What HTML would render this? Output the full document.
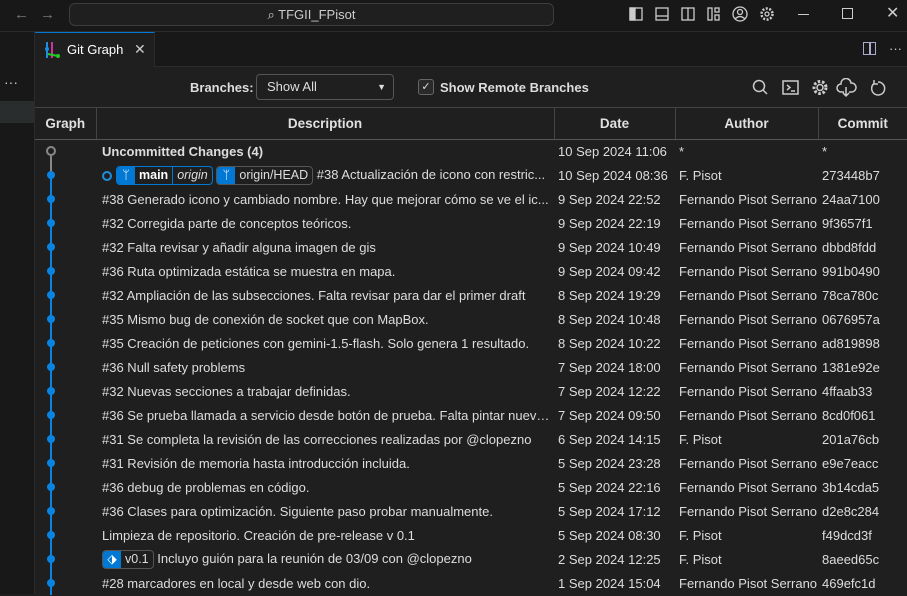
<!DOCTYPE html>
<html><head><meta charset="utf-8"><style>
*{box-sizing:border-box;margin:0;padding:0}
body{width:907px;height:594px;overflow:hidden;background:#1f1f1f;font-family:"Liberation Sans",sans-serif;color:#ccc;font-size:13px;position:relative}
.abs{position:absolute}
#title{left:0;top:0;width:907px;height:32px;background:#181818;border-bottom:1px solid #2b2b2b}
#search{left:69px;top:3px;width:485px;height:23px;border:1px solid #3c3c3c;border-radius:6px;background:#1f1f1f;text-align:center;line-height:21px;color:#ccc;font-size:13px}
#side{left:0;top:32px;width:35px;height:562px;background:#181818;border-right:1px solid #2b2b2b}
#tabs{left:35px;top:32px;width:872px;height:35px;background:#181818;border-bottom:1px solid #2b2b2b}
#tab{left:35px;top:32px;width:120px;height:35px;background:#1f1f1f;border-top:1px solid #0078d4;border-right:1px solid #2b2b2b}
table{position:absolute;left:35px;top:107px;border-collapse:collapse;width:872px;table-layout:fixed}
th{height:32px;color:#e0e0e0;font-size:13.5px;font-weight:bold;border-right:1px solid #444;border-bottom:1px solid #555;border-top:1px solid #444}
td{height:24px;white-space:nowrap;overflow:hidden;text-overflow:ellipsis;padding-left:4px;color:#ddd;font-size:13px}
.ref{display:inline-flex;height:19px;border:1px solid #0078d4;border-radius:4px;vertical-align:middle;overflow:hidden;font-size:12.5px;line-height:17px}
.ref .i{background:#0078d4;width:18px;color:#fff;text-align:center}
.ref span{padding:0 4px}
</style></head><body>
<div id="title" class="abs"></div>
<div class="abs" style="left:14px;top:6px;color:#777;font-size:15px">←</div>
<div class="abs" style="left:40px;top:6px;color:#777;font-size:15px">→</div>
<div id="search" class="abs">⌕ TFGII_FPisot</div>
<svg class="abs" style="left:628px;top:6px" width="150" height="18" fill="none" stroke="#ccc" stroke-width="1.3">
<rect x="2" y="2" width="12" height="12"/><rect x="2" y="2" width="5" height="12" fill="#ccc"/>
<rect x="28" y="2" width="12" height="12"/><line x1="28" y1="10" x2="40" y2="10"/>
<rect x="54" y="2" width="12" height="12"/><line x1="60" y1="2" x2="60" y2="14"/>
<rect x="80" y="2" width="4" height="12"/><rect x="87" y="2" width="4" height="4"/><rect x="87" y="9" width="4" height="5"/>
<circle cx="112" cy="8" r="7"/><circle cx="112" cy="6" r="2.5"/><path d="M107 13 Q112 8 117 13"/>
<circle cx="139" cy="8" r="5.5" stroke-dasharray="2 1.5" stroke-width="2.5"/><circle cx="139" cy="8" r="2"/>
</svg>
<div class="abs" style="left:798px;top:14px;width:11px;height:1px;background:#ccc"></div>
<div class="abs" style="left:842px;top:8px;width:11px;height:11px;border:1px solid #ccc"></div>
<div class="abs" style="left:886px;top:3px;color:#ccc;font-size:16px">✕</div>
<div id="side" class="abs"></div>
<div class="abs" style="left:0;top:101px;width:34px;height:22px;background:#2a2d2e"></div>
<div class="abs" style="left:4px;top:74px;color:#ccc;font-size:14px">···</div>
<div id="tabs" class="abs"></div>
<div id="tab" class="abs"></div>
<svg class="abs" style="left:45px;top:42px" width="16" height="16"><rect x="1" y="0" width="2" height="16" fill="#1a8fe0"/><rect x="6" y="0" width="2" height="16" fill="#d030a0"/><circle cx="2" cy="7" r="2" fill="#1a8fe0"/><line x1="3" y1="12" x2="13" y2="14" stroke="#2c2" stroke-width="2"/><circle cx="13" cy="14" r="2" fill="#2c2"/></svg>
<div class="abs" style="left:67px;top:42px;color:#fff;font-size:13px">Git Graph</div>
<div class="abs" style="left:134px;top:41px;color:#ccc;font-size:14px">✕</div>
<div class="abs" style="left:863px;top:42px;width:13px;height:13px;border:1.5px solid #aac;"></div>
<div class="abs" style="left:869px;top:42px;width:1.5px;height:13px;background:#aac"></div>
<div class="abs" style="left:889px;top:41px;color:#ccc">···</div>
<div class="abs" style="left:190px;top:80px;font-weight:bold;color:#ddd">Branches:</div>
<div class="abs" style="left:256px;top:74px;width:138px;height:26px;border:1px solid #555;border-radius:4px;background:#1f1f1f;padding-left:10px;line-height:24px;color:#ddd">Show All<span style="position:absolute;right:7px;font-size:9px">▼</span></div>
<div class="abs" style="left:418px;top:79px;width:16px;height:16px;border:1px solid #666;border-radius:3px;background:#2a2a2a;color:#ddd;font-size:11px;text-align:center;line-height:14px">✓</div>
<div class="abs" style="left:440px;top:80px;font-weight:bold;color:#ddd">Show Remote Branches</div>
<svg class="abs" style="left:750px;top:78px" width="140" height="20" fill="none" stroke="#ccc" stroke-width="1.5">
<circle cx="9" cy="8" r="5.5"/><line x1="13" y1="12" x2="17" y2="16"/>
<rect x="33" y="3" width="15" height="13"/><path d="M37 7 l3 2.5 -3 2.5 M41 13 h4"/>
<circle cx="70" cy="9.5" r="3" /><circle cx="70" cy="9.5" r="6" stroke-dasharray="2.5 1.8" stroke-width="3"/>
<path d="M94 14 h-3 a4 4 0 0 1 0-8 a5 5 0 0 1 10-1 a4 4 0 0 1 1 9 h-3 M96 9 v9 M93 15 l3 3 3-3"/>
<path d="M128 4 a6.5 6.5 0 1 1 -4 1.5 M124 2 v4 h4"/>
</svg>
<table>
<colgroup><col style="width:61px"><col style="width:458px"><col style="width:121px"><col style="width:143px"><col style="width:89px"></colgroup>
<tr><th>Graph</th><th>Description</th><th>Date</th><th>Author</th><th style="border-right:none">Commit</th></tr>
<tr><td></td><td style="padding-left:6px;font-weight:bold">Uncommitted Changes (4)</td><td>10 Sep 2024 11:06</td><td>*</td><td>*</td></tr>
<tr><td></td><td style="padding-left:6px"><span style="display:inline-block;width:10px;height:10px;border:2px solid #1a8fe0;border-radius:50%;vertical-align:middle;margin-right:4px"></span><span class="ref"><span class="i">ᛘ</span><span style="font-weight:bold;color:#fff;border-right:1px solid #0078d4">main</span><span style="font-style:italic">origin</span></span> <span class="ref" style="border-color:#555"><span class="i">ᛘ</span><span>origin/HEAD</span></span> #38 Actualización de icono con restric...</td><td>10 Sep 2024 08:36</td><td>F. Pisot</td><td>273448b7</td></tr>
<tr><td></td><td style="padding-left:6px">#38 Generado icono y cambiado nombre. Hay que mejorar cómo se ve el ic...</td><td>9 Sep 2024 22:52</td><td>Fernando Pisot Serrano</td><td>24aa7100</td></tr>
<tr><td></td><td style="padding-left:6px">#32 Corregida parte de conceptos teóricos.</td><td>9 Sep 2024 22:19</td><td>Fernando Pisot Serrano</td><td>9f3657f1</td></tr>
<tr><td></td><td style="padding-left:6px">#32 Falta revisar y añadir alguna imagen de gis</td><td>9 Sep 2024 10:49</td><td>Fernando Pisot Serrano</td><td>dbbd8fdd</td></tr>
<tr><td></td><td style="padding-left:6px">#36 Ruta optimizada estática se muestra en mapa.</td><td>9 Sep 2024 09:42</td><td>Fernando Pisot Serrano</td><td>991b0490</td></tr>
<tr><td></td><td style="padding-left:6px">#32 Ampliación de las subsecciones. Falta revisar para dar el primer draft</td><td>8 Sep 2024 19:29</td><td>Fernando Pisot Serrano</td><td>78ca780c</td></tr>
<tr><td></td><td style="padding-left:6px">#35 Mismo bug de conexión de socket que con MapBox.</td><td>8 Sep 2024 10:48</td><td>Fernando Pisot Serrano</td><td>0676957a</td></tr>
<tr><td></td><td style="padding-left:6px">#35 Creación de peticiones con gemini-1.5-flash. Solo genera 1 resultado.</td><td>8 Sep 2024 10:22</td><td>Fernando Pisot Serrano</td><td>ad819898</td></tr>
<tr><td></td><td style="padding-left:6px">#36 Null safety problems</td><td>7 Sep 2024 18:00</td><td>Fernando Pisot Serrano</td><td>1381e92e</td></tr>
<tr><td></td><td style="padding-left:6px">#32 Nuevas secciones a trabajar definidas.</td><td>7 Sep 2024 12:22</td><td>Fernando Pisot Serrano</td><td>4ffaab33</td></tr>
<tr><td></td><td style="padding-left:6px">#36 Se prueba llamada a servicio desde botón de prueba. Falta pintar nueva...</td><td>7 Sep 2024 09:50</td><td>Fernando Pisot Serrano</td><td>8cd0f061</td></tr>
<tr><td></td><td style="padding-left:6px">#31 Se completa la revisión de las correcciones realizadas por @clopezno</td><td>6 Sep 2024 14:15</td><td>F. Pisot</td><td>201a76cb</td></tr>
<tr><td></td><td style="padding-left:6px">#31 Revisión de memoria hasta introducción incluida.</td><td>5 Sep 2024 23:28</td><td>Fernando Pisot Serrano</td><td>e9e7eacc</td></tr>
<tr><td></td><td style="padding-left:6px">#36 debug de problemas en código.</td><td>5 Sep 2024 22:16</td><td>Fernando Pisot Serrano</td><td>3b14cda5</td></tr>
<tr><td></td><td style="padding-left:6px">#36 Clases para optimización. Siguiente paso probar manualmente.</td><td>5 Sep 2024 17:12</td><td>Fernando Pisot Serrano</td><td>d2e8c284</td></tr>
<tr><td></td><td style="padding-left:6px">Limpieza de repositorio. Creación de pre-release v 0.1</td><td>5 Sep 2024 08:30</td><td>F. Pisot</td><td>f49dcd3f</td></tr>
<tr><td></td><td style="padding-left:6px"><span class="ref" style="border-color:#555"><span class="i">⬗</span><span>v0.1</span></span> Incluyo guión para la reunión de 03/09 con @clopezno</td><td>2 Sep 2024 12:25</td><td>F. Pisot</td><td>8aeed65c</td></tr>
<tr><td></td><td style="padding-left:6px">#28 marcadores en local y desde web con dio.</td><td>1 Sep 2024 15:04</td><td>Fernando Pisot Serrano</td><td>469efc1d</td></tr>
</table>
<svg class="abs" style="left:35px;top:140px" width="40" height="455">
<line x1="16" y1="16" x2="16" y2="36" stroke="#888" stroke-width="2"/>
<line x1="16" y1="36" x2="16" y2="455" stroke="#0a84e0" stroke-width="2"/>
<circle cx="16" cy="11" r="4" fill="#1f1f1f" stroke="#888" stroke-width="2"/>
<g fill="#0a84e0">
<circle cx="16" cy="35" r="4"/><circle cx="16" cy="59" r="4"/><circle cx="16" cy="83" r="4"/><circle cx="16" cy="107" r="4"/><circle cx="16" cy="131" r="4"/><circle cx="16" cy="155" r="4"/><circle cx="16" cy="179" r="4"/><circle cx="16" cy="203" r="4"/><circle cx="16" cy="227" r="4"/><circle cx="16" cy="251" r="4"/><circle cx="16" cy="275" r="4"/><circle cx="16" cy="299" r="4"/><circle cx="16" cy="323" r="4"/><circle cx="16" cy="347" r="4"/><circle cx="16" cy="371" r="4"/><circle cx="16" cy="395" r="4"/><circle cx="16" cy="419" r="4"/><circle cx="16" cy="443" r="4"/>
</g></svg>
</body></html>
